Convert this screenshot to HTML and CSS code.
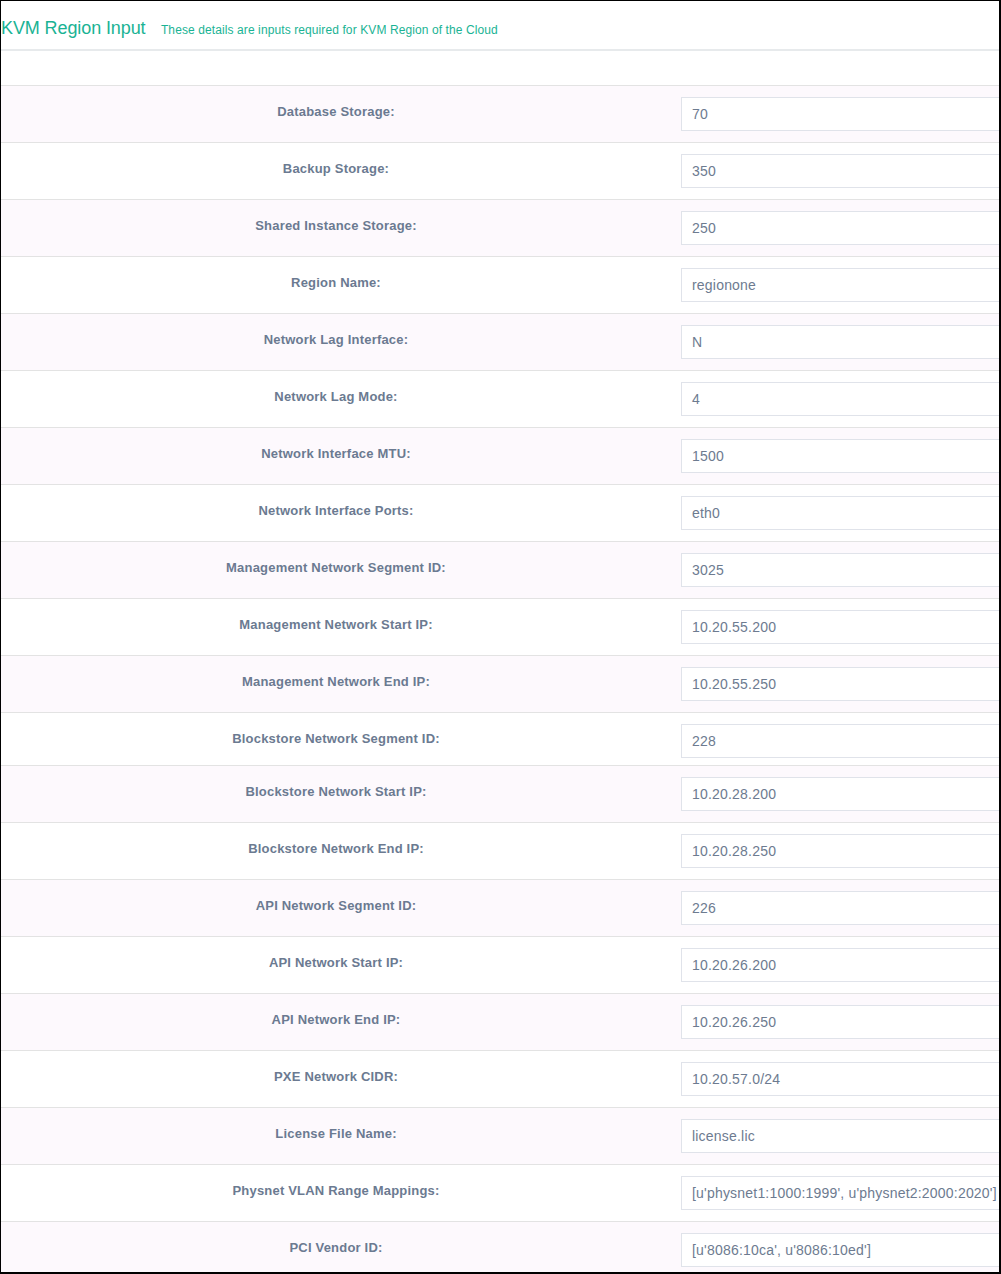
FILE: index.html
```html
<!DOCTYPE html>
<html lang="en">
<head>
<meta charset="utf-8">
<title>KVM Region Input</title>
<link rel="stylesheet" href="styles.css">
</head>
<body>
<div class="panel">
  <div class="panel-heading">
    <span class="title">KVM Region Input</span>
    <span class="subtitle">These details are inputs required for KVM Region of the Cloud</span>
  </div>
  <div class="spacer"></div>
  <div class="rows">
    <div class="row odd"><div class="label">Database Storage:</div><div class="cell"><div class="field">70</div></div></div>
    <div class="row"><div class="label">Backup Storage:</div><div class="cell"><div class="field">350</div></div></div>
    <div class="row odd"><div class="label">Shared Instance Storage:</div><div class="cell"><div class="field">250</div></div></div>
    <div class="row"><div class="label">Region Name:</div><div class="cell"><div class="field">regionone</div></div></div>
    <div class="row odd"><div class="label">Network Lag Interface:</div><div class="cell"><div class="field">N</div></div></div>
    <div class="row"><div class="label">Network Lag Mode:</div><div class="cell"><div class="field">4</div></div></div>
    <div class="row odd"><div class="label">Network Interface MTU:</div><div class="cell"><div class="field">1500</div></div></div>
    <div class="row"><div class="label">Network Interface Ports:</div><div class="cell"><div class="field">eth0</div></div></div>
    <div class="row odd"><div class="label">Management Network Segment ID:</div><div class="cell"><div class="field">3025</div></div></div>
    <div class="row"><div class="label">Management Network Start IP:</div><div class="cell"><div class="field">10.20.55.200</div></div></div>
    <div class="row odd"><div class="label">Management Network End IP:</div><div class="cell"><div class="field">10.20.55.250</div></div></div>
    <div class="row short"><div class="label">Blockstore Network Segment ID:</div><div class="cell"><div class="field">228</div></div></div>
    <div class="row odd"><div class="label">Blockstore Network Start IP:</div><div class="cell"><div class="field">10.20.28.200</div></div></div>
    <div class="row"><div class="label">Blockstore Network End IP:</div><div class="cell"><div class="field">10.20.28.250</div></div></div>
    <div class="row odd"><div class="label">API Network Segment ID:</div><div class="cell"><div class="field">226</div></div></div>
    <div class="row"><div class="label">API Network Start IP:</div><div class="cell"><div class="field">10.20.26.200</div></div></div>
    <div class="row odd"><div class="label">API Network End IP:</div><div class="cell"><div class="field">10.20.26.250</div></div></div>
    <div class="row"><div class="label">PXE Network CIDR:</div><div class="cell"><div class="field">10.20.57.0/24</div></div></div>
    <div class="row odd"><div class="label">License File Name:</div><div class="cell"><div class="field">license.lic</div></div></div>
    <div class="row"><div class="label">Physnet VLAN Range Mappings:</div><div class="cell"><div class="field">[u'physnet1:1000:1999', u'physnet2:2000:2020']</div></div></div>
    <div class="row odd"><div class="label">PCI Vendor ID:</div><div class="cell"><div class="field">[u'8086:10ca', u'8086:10ed']</div></div></div>
  </div>
</div>
</body>
</html>
```

FILE: styles.css
```css
html, body {
  margin: 0;
  padding: 0;
  background: #ffffff;
}

body {
  font-family: "Liberation Sans", Arial, sans-serif;
}

.panel {
  box-sizing: border-box;
  width: 1001px;
  height: 1274px;
  border-style: solid;
  border-color: #000000;
  border-width: 1px 2px 2px 1px;
  overflow: hidden;
  background: #ffffff;
}

.panel-heading {
  height: 31px;
  padding: 17px 0 0 0;
  line-height: 20px;
  border-bottom: 2px solid #e7eaec;
  white-space: nowrap;
}

.title {
  font-size: 18px;
  letter-spacing: -0.1px;
  color: #1ab394;
}

.subtitle {
  margin-left: 11px;
  font-size: 12px;
  letter-spacing: 0.1px;
  color: #1ab394;
}

.spacer {
  height: 34px;
  border-bottom: 1px solid #e3e3e3;
}

.row {
  display: grid;
  grid-template-columns: 670px 1fr;
  border-bottom: 1px solid #e3e3e3;
  background: #ffffff;
}

.row.odd {
  background: #fdf9fd;
}

.label {
  padding-top: 17px;
  text-align: center;
  font-size: 13px;
  font-weight: bold;
  letter-spacing: 0.2px;
  line-height: 17px;
  color: #6b7a91;
  white-space: nowrap;
}

.cell {
  padding: 11px 0 11px 10px;
}

.row.short .cell {
  padding-bottom: 7px;
}

.field {
  box-sizing: border-box;
  width: 360px;
  height: 34px;
  padding: 0 10px;
  border: 1px solid #e0e3ea;
  background: #ffffff;
  font-size: 14px;
  letter-spacing: 0.2px;
  line-height: 32px;
  color: #6d7b90;
  white-space: nowrap;
}
```
